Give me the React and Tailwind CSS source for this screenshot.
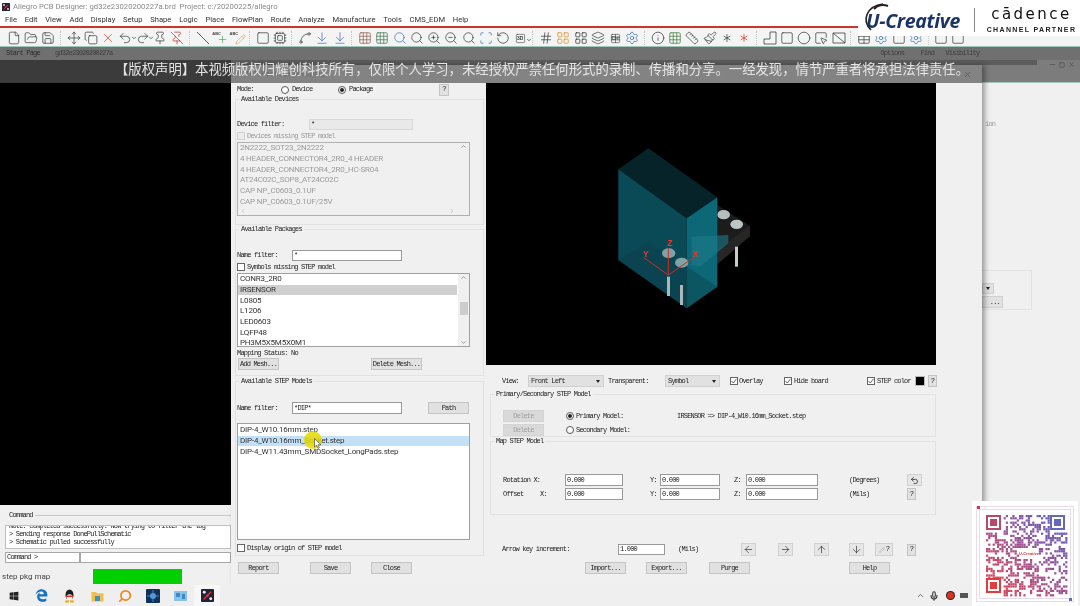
import { ArrowDown, ArrowLeft, ArrowRight, ArrowUp, ArrowDownToLine, Asterisk, ChevronDown, ChevronLeft, ChevronRight, ChevronUp, Circle, Copy, Cpu, File, FolderOpen, Grid3x3, Hash, Info, Layers, LayoutGrid, Mic, Minus, Move, Paintbrush, Pencil, Pin, PinOff, Plus, Redo2, RotateCcw, Ruler, Save, Scan, Search, Settings, Spline, Square, SquareMousePointer, Table, Undo2, X, ZoomIn, ZoomOut } from "lucide-react";
import { FaEdgeLegacy, FaWindows } from "react-icons/fa";

const MENU = ["File", "Edit", "View", "Add", "Display", "Setup", "Shape", "Logic", "Place", "FlowPlan", "Route", "Analyze", "Manufacture", "Tools", "CMS_EDM", "Help"];

const DEVICES = ["2N2222_SOT23_2N2222", "4 HEADER_CONNECTOR4_2R0_4 HEADER", "4 HEADER_CONNECTOR4_2R0_HC-SR04", "AT24C02C_SOP8_AT24C02C", "CAP NP_C0603_0.1UF", "CAP NP_C0603_0.1UF/25V"];
const PACKAGES = ["CONR3_2R0", "IRSENSOR", "L0805", "L1206", "LED0603", "LQFP48", "PH3M5X5M5X0M1"];
const MODELS = ["DIP-4_W10.16mm.step", "DIP-4_W10.16mm_Socket.step", "DIP-4_W11.43mm_SMDSocket_LongPads.step"];

const StepShape = ({ size, className }) => (
  <svg width={size} height={size} viewBox="0 0 14 14" fill="none" stroke="currentColor" strokeWidth="0.75" className={className}>
    <path d="M1 13 V8 H7 V1 H13 V13 Z" />
  </svg>
);

const BoxDiagonal = ({ size, className }) => (
  <svg width={size} height={size} viewBox="0 0 14 14" fill="none" stroke="currentColor" strokeWidth="0.75" className={className}>
    <path d="M1 2 H13 V12 H1 Z M1 2 L13 12" />
  </svg>
);

const LineDown = ({ size, className }) => (
  <svg width={size} height={size} viewBox="0 0 14 14" fill="none" stroke="currentColor" strokeWidth="0.75" className={className}>
    <path d="M1 1 L13 13" />
  </svg>
);

// Toolbar groups: icon, colour, small text on the icon, dropdown caret
const TOOLS = [
  [[File], [FolderOpen], [Save]],
  [[Move], [Copy], [X, "text-[#e0391c]"], [Undo2, null, null, true], [Redo2, null, null, true], [Pin], [PinOff, "text-[#b8332a]"]],
  [[LineDown], [Plus, "text-[#1f9d3a]", "ABC"], [Pencil, "text-[#c9a227]", "ABC"]],
  [[Square], [Cpu]],
  [[Spline], [ArrowDownToLine, "text-[#3b6fb5]"], [ArrowDownToLine, "text-[#3b6fb5]"]],
  [[Grid3x3, "text-[#8a5a4a]"], [Grid3x3, "text-[#3c6e47]"], [Search, "text-[#2f6fb0]"], [Search], [ZoomIn], [ZoomOut], [Search], [Scan, "text-[#2f6fb0]"], [RotateCcw], [Square, null, "3D", true]],
  [[Hash], [LayoutGrid, "text-[#d08a1d]"], [LayoutGrid, "text-[#222]"], [Layers], [Table, null, "CH"], [Settings, "text-[#2f6fb0]"]],
  [[Info], [Grid3x3, "text-[#3c7a3c]"], [Ruler], [Paintbrush], [Asterisk], [Asterisk, "text-[#c9332a]"]],
  [[StepShape], [Square], [Circle], [SquareMousePointer], [BoxDiagonal]],
  [[Table], [Settings, "text-[#2f6fb0]"], [Square], [Settings, "text-[#2f6fb0]"]],
  [[Square], [Square]],
];

const Label = ({ children, className = "", tone = "text-[#222]" }) => (
  <span className={`font-['Liberation_Mono',monospace] text-[7px] leading-none tracking-[-0.82px] whitespace-nowrap ${tone} ${className}`}>{children}</span>
);

const Btn = ({ children, className = "w-[41px]", muted }) => (
  <div className={`h-[12px] shrink-0 flex items-center justify-center border ${muted ? "bg-[#d9d9d9] border-[#d4d4d4]" : "bg-[#e1e1e1] border-[#c4c4c4]"} ${className}`}>
    <Label tone={muted ? "text-[#a0a0a0]" : "text-[#222]"}>{children}</Label>
  </div>
);

const Check = ({ checked, disabled }) => (
  <div className={`w-[8px] h-[8px] shrink-0 border flex items-center justify-center ${disabled ? "border-[#d0d0d0] bg-[#ececec]" : "border-[#666] bg-white"}`}>
    {checked && (
      <svg width="6" height="6" viewBox="0 0 6 6"><path d="M0.5 3 L2.3 5 L5.5 0.8" fill="none" stroke="#444" strokeWidth="0.8" /></svg>
    )}
  </div>
);

const Radio = ({ checked }) => (
  <div className="w-[8px] h-[8px] shrink-0 rounded-full border border-[#555] bg-white flex items-center justify-center">
    {checked && <div className="w-[4px] h-[4px] rounded-full bg-[#222]" />}
  </div>
);

const Field = ({ children, className = "", disabled }) => (
  <div className={`shrink-0 flex items-center px-[1px] border ${disabled ? "border-[#d8d8d8] bg-[#e9e9e9]" : "border-[#999] bg-white"} ${className}`}>
    <Label>{children}</Label>
  </div>
);

const Select = ({ children, className = "" }) => (
  <div className={`h-[12px] shrink-0 flex items-center justify-between pl-[2px] pr-[3px] bg-[#e1e1e1] border border-[#d0d0d0] ${className}`}>
    <Label>{children}</Label>
    <div className="w-0 h-0 border-x-[2.5px] border-x-transparent border-t-[3px] border-t-[#222]" />
  </div>
);

// Group box with the title sitting on its border
const Group = ({ title, className = "", children }) => (
  <div className={`relative border border-[#e2e2e2] ${className}`}>
    <div className="absolute left-[3px] -top-[4px] px-[2px] flex bg-[#f0f0f0]">
      <Label>{title}</Label>
    </div>
    {children}
  </div>
);

const ListBox = ({ items, selected, selectedClass, disabled, className = "", scroll, hscroll }) => (
  <div className={`relative border ${disabled ? "border-[#b0b0b0] bg-[#f0f0f0]" : "border-[#a0a0a0] bg-white"} overflow-hidden ${className}`}>
    <div className={scroll ? "mr-[12px]" : ""}>
      {items.map((item) => (
        <div
          key={item}
          className={`h-[10.67px] pl-[2px] flex items-center font-['Roboto',sans-serif] text-[8px] tracking-[-0.2px] whitespace-nowrap ${disabled ? "text-[#9c9c9c]" : "text-[#333]"} ${item === selected ? selectedClass : ""}`}
        >
          {item}
        </div>
      ))}
    </div>
    {scroll && (
      <div className="absolute right-0 top-0 bottom-0 w-[11px] flex flex-col items-center justify-between bg-[#f0f0f0]">
        <ChevronUp size={7} className="text-[#666]" />
        {!disabled && <div className="absolute top-[28px] w-[8px] h-[13px] bg-[#cdcdcd]" />}
        <ChevronDown size={7} className="text-[#666]" />
      </div>
    )}
    {hscroll && (
      <div className="absolute left-0 right-0 bottom-0 h-[9px] px-[2px] flex items-center justify-between bg-[#f0f0f0]">
        <ChevronLeft size={6} className="text-[#999]" />
        <ChevronRight size={6} className="text-[#999] mr-[12px]" />
      </div>
    )}
  </div>
);

const LeftPanel = () => (
  <div className="w-[255px] shrink-0 pl-[4px]">
    <div className="h-[11px] mt-[1px] pl-[2px] flex items-center">
      <Label className="w-[44px]">Mode:</Label>
      <Radio />
      <Label className="ml-[3px] w-[46px]">Device</Label>
      <Radio checked />
      <Label className="ml-[3px] w-[90px]">Package</Label>
      <Btn className="w-[10px]">?</Btn>
    </div>

    <Group title="Available Devices" className="mt-[4px] w-[249px] h-[126px] pl-[1px] pt-[19px]">
      <div className="h-[11px] flex items-center">
        <Label className="w-[72px]">Device filter:</Label>
        <Field disabled className="w-[104px] h-[11px]">*</Field>
      </div>
      <div className="h-[8px] mt-[2px] flex items-center gap-[2px]">
        <Check disabled />
        <Label tone="text-[#9a9a9a]">Devices missing STEP model</Label>
      </div>
      <ListBox disabled scroll hscroll items={DEVICES} className="mt-[2px] w-[233px] h-[74px]" />
    </Group>

    <Group title="Available Packages" className="mt-[4px] w-[249px] h-[147px] pl-[1px] pt-[20px]">
      <div className="h-[11px] flex items-center">
        <Label className="w-[55px]">Name filter:</Label>
        <Field className="w-[110px] h-[11px]">*</Field>
      </div>
      <div className="h-[8px] mt-[2px] flex items-center gap-[2px]">
        <Check />
        <Label>Symbols missing STEP model</Label>
      </div>
      <ListBox scroll items={PACKAGES} selected="IRSENSOR" selectedClass="bg-[#d0d0d0]" className="mt-[2px] w-[233px] h-[74px]" />
      <div className="h-[8px] mt-[2px] flex items-center">
        <Label>Mapping Status: No</Label>
      </div>
      <div className="mt-[1px] ml-[1px] flex">
        <Btn>Add Mesh...</Btn>
        <Btn className="w-[51px] ml-[92px]">Delete Mesh...</Btn>
      </div>
    </Group>

    <Group title="Available STEP Models" className="mt-[5px] w-[249px] h-[175px] pl-[1px] pt-[20px]">
      <div className="h-[12px] flex items-center">
        <Label className="w-[55px]">Name filter:</Label>
        <Field className="w-[110px] h-[12px]">*DIP*</Field>
        <Btn className="w-[41px] ml-[26px]">Path</Btn>
      </div>
      <ListBox items={MODELS} selected={MODELS[1]} selectedClass="bg-[#c4e0f7]" className="mt-[9px] w-[233px] h-[117px] pt-[1px]" />
      <div className="h-[8px] mt-[4px] flex items-center gap-[2px]">
        <Check />
        <Label>Display origin of STEP model</Label>
      </div>
    </Group>

    <div className="mt-[6px] ml-[3px] flex">
      <Btn>Report</Btn>
      <Btn className="w-[41px] ml-[31px]">Save</Btn>
      <Btn className="w-[41px] ml-[20px]">Close</Btn>
    </div>
  </div>
);

// Isometric socket and its transparent STEP body
const Model = () => (
  <svg width="180" height="180" viewBox="0 0 540 540" className="ml-[104px] mt-[57px]">
    <polygon points="382,195 480,258 480,288 380,375 290,315 295,240" fill="#1c1c1c" />
    <polygon points="480,258 480,288 382,372 382,330" fill="#262626" />
    <rect x="435" y="320" width="9" height="60" fill="#c4cccc" />
    <ellipse cx="401" cy="224" rx="19" ry="14" fill="#b4bebe" />
    <ellipse cx="440" cy="253" rx="19" ry="14" fill="#bcc6c6" />
    <polygon points="175,25 382,172 290,235 85,88" fill="#052329" />
    <polygon points="85,88 290,235 290,505 85,360" fill="#0a4a56" />
    <polygon points="290,235 382,172 382,440 290,505" fill="#0c6877" />
    <polygon points="85,360 175,305 382,440 290,505" fill="#0d3f49" opacity="0.45" />
    <polygon points="305,290 415,285 415,310 330,380 305,375" fill="#1d7c8a" opacity="0.6" />
    <ellipse cx="236" cy="340" rx="20" ry="15" fill="#7fa3a4" />
    <ellipse cx="275" cy="368" rx="20" ry="15" fill="#7fa3a4" />
    <rect x="231" y="410" width="9" height="58" fill="#a9b8b9" />
    <rect x="270" y="435" width="9" height="60" fill="#a9b8b9" />
    <g stroke="#d12a22" strokeWidth="3" fill="none">
      <path d="M235 405 L235 325" />
      <path d="M235 405 L160 352" />
      <path d="M235 405 L315 350" />
    </g>
    <text x="232" y="318" fontSize="26" fontWeight="700" fill="#f0362b" fontFamily="Liberation Sans, sans-serif">Z</text>
    <text x="159" y="350" fontSize="26" fontWeight="700" fill="#f0362b" fontFamily="Liberation Sans, sans-serif">Y</text>
    <text x="308" y="350" fontSize="26" fontWeight="700" fill="#f0362b" fontFamily="Liberation Sans, sans-serif">X</text>
  </svg>
);

const ArrowBtn = ({ icon: Icon, className = "" }) => (
  <div className={`w-[15px] h-[13px] shrink-0 flex items-center justify-center bg-[#e6e6e6] border border-[#d0d0d0] ${className}`}>
    <Icon size={11} strokeWidth={1.4} className="text-[#222]" />
  </div>
);

const RightPanel = () => (
  <div className="flex-1 min-w-0">
    <div className="w-[450px] h-[282px] bg-black overflow-hidden">
      <Model />
    </div>

    <div className="mt-[10px] h-[12px] pl-[16px] flex items-center">
      <Label className="w-[26px]">View:</Label>
      <Select className="w-[76px]">Front Left</Select>
      <Label className="ml-[4px] w-[57px]">Transparent:</Label>
      <Select className="w-[55px]">Symbol</Select>
      <div className="ml-[10px] flex items-center gap-[1px] w-[54px]"><Check checked /><Label>Overlay</Label></div>
      <div className="flex items-center gap-[2px] w-[83px]"><Check checked /><Label>Hide board</Label></div>
      <div className="flex items-center gap-[2px] w-[48px]"><Check checked /><Label>STEP color</Label></div>
      <div className="w-[10px] h-[10px] bg-black border border-[#bbb]" />
      <Btn className="w-[9px] ml-[3px]">?</Btn>
    </div>

    <Group title="Primary/Secondary STEP Model" className="mt-[7px] ml-[4px] w-[446px] h-[43px] pl-[12px] pt-[15px]">
      <div className="h-[12px] flex items-center">
        <Btn muted>Delete</Btn>
        <div className="ml-[22px]"><Radio checked /></div>
        <Label className="ml-[2px] w-[101px]">Primary Model:</Label>
        <Label>IRSENSOR =&gt; DIP-4_W10.16mm_Socket.step</Label>
      </div>
      <div className="h-[12px] mt-[2px] flex items-center">
        <Btn muted>Delete</Btn>
        <div className="ml-[22px]"><Radio /></div>
        <Label className="ml-[2px]">Secondary Model:</Label>
      </div>
    </Group>

    <Group title="Map STEP Model" className="mt-[4px] ml-[4px] w-[446px] h-[74px] pl-[12px] pt-[32px]">
      <div className="h-[12px] flex items-center">
        <Label className="w-[62px]">Rotation X:</Label>
        <Field className="w-[58px] h-[12px]">0.000</Field>
        <Label className="ml-[27px] w-[10px]">Y:</Label>
        <Field className="w-[60px] h-[12px]">0.000</Field>
        <Label className="ml-[14px] w-[12px]">Z:</Label>
        <Field className="w-[72px] h-[12px]">0.000</Field>
        <Label className="ml-[31px] w-[58px]">(Degrees)</Label>
        <div className="w-[15px] h-[12px] flex items-center justify-center bg-[#e6e6e6] border border-[#d0d0d0]"><Undo2 size={9} className="text-[#222]" /></div>
      </div>
      <div className="h-[12px] mt-[2px] flex items-center">
        <Label className="w-[37px]">Offset</Label>
        <Label className="w-[25px]">X:</Label>
        <Field className="w-[58px] h-[12px]">0.000</Field>
        <Label className="ml-[27px] w-[10px]">Y:</Label>
        <Field className="w-[60px] h-[12px]">0.000</Field>
        <Label className="ml-[14px] w-[12px]">Z:</Label>
        <Field className="w-[72px] h-[12px]">0.000</Field>
        <Label className="ml-[31px] w-[58px]">(Mils)</Label>
        <Btn className="w-[9px]">?</Btn>
      </div>
    </Group>

    <div className="mt-[28px] h-[13px] pl-[16px] flex items-center">
      <Label className="w-[116px]">Arrow key increment:</Label>
      <Field className="w-[47px] h-[11px]">1.000</Field>
      <Label className="ml-[13px] w-[63px]">(Mils)</Label>
      <ArrowBtn icon={ArrowLeft} />
      <ArrowBtn icon={ArrowRight} className="ml-[22px]" />
      <ArrowBtn icon={ArrowUp} className="ml-[21px]" />
      <ArrowBtn icon={ArrowDown} className="ml-[20px]" />
      <div className="ml-[11px] w-[18px] h-[13px] flex items-center justify-center gap-[1px] bg-[#e6e6e6] border border-[#d0d0d0]">
        <Pencil size={6} className="text-[#aaa]" />
        <Label>?</Label>
      </div>
      <Btn className="w-[9px] ml-[14px]">?</Btn>
    </div>

    <div className="mt-[6px] ml-[99px] flex">
      <Btn>Import...</Btn>
      <Btn className="w-[41px] ml-[20px]">Export...</Btn>
      <Btn className="w-[41px] ml-[22px]">Purge</Btn>
      <Btn className="w-[41px] ml-[99px]">Help</Btn>
    </div>
  </div>
);

const Dialog = () => (
  <div className="absolute left-[231px] top-[65px] w-[751px] h-[520px] bg-[#f0f0f0] shadow-[3px_0_5px_rgba(0,0,0,0.35)] flex flex-col">
    <div className="h-[18px] shrink-0 bg-[#838383] flex items-center justify-between pl-[9px] pr-[10px]">
      <span className="font-['Roboto',sans-serif] text-[8px] text-[#6c6c6c]">STEP Package Mapping</span>
      <X size={9} className="text-[#555]" />
    </div>
    <div className="flex-1 flex min-h-0">
      <LeftPanel />
      <RightPanel />
    </div>
  </div>
);

const Toolbar = () => (
  <div className="h-[19px] shrink-0 bg-[#f4f4f4] flex items-center pl-[5px] pt-[2px] border-b border-[#9fc4b8]">
    {TOOLS.map((group, i) => (
      <div key={i} className={`flex items-center ${i > 0 ? "ml-[3px] pl-[4px] border-l border-dotted border-[#c8c8c8]" : ""}`}>
        {group.map(([Icon, color, text, caret], j) => (
          <div key={j} className="relative w-[17.3px] flex justify-center">
            <Icon size={text ? 11 : 14} strokeWidth={1.2} className={`${color || "text-[#333]"} ${text === "ABC" ? "translate-x-[3px] translate-y-[1px]" : ""}`} />
            {text && (
              <span className={`absolute font-['Liberation_Sans',sans-serif] font-bold leading-none text-[#444] ${text === "ABC" ? "left-[1px] -top-[1px] text-[4px]" : "left-[5px] top-[3px] text-[5px]"}`}>{text}</span>
            )}
            {caret && <ChevronDown size={6} strokeWidth={3} className="absolute -right-[3px] top-[4px] text-[#444]" />}
          </div>
        ))}
      </div>
    ))}
  </div>
);

const Logo = () => (
  <div className="absolute right-0 top-0 w-[222px] h-[36px] bg-white flex items-start">
    <div className="relative w-[116px] h-[36px] shrink-0">
      <svg width="40" height="34" viewBox="0 0 40 34" className="absolute left-[3px] top-[0px]">
        <path d="M10 30 C0 20 6 6 22 4" fill="none" stroke="#222" strokeWidth="1.6" />
        <path d="M13 9 C16 5 22 4 27 6" fill="none" stroke="#222" strokeWidth="2.2" />
      </svg>
      <span className="absolute left-[8px] top-[9px] font-['Open_Sans',sans-serif] italic font-bold text-[19.5px] leading-[24px] tracking-[-0.3px] text-[#1b3468] whitespace-nowrap">U-Creative</span>
    </div>
    <div className="w-px h-[24px] mt-[8px] bg-[#888]" />
    <div className="ml-[8px] w-[97px] flex flex-col items-center">
      <span className="font-['DejaVu_Sans',sans-serif] text-[15px] leading-[20px] mt-[4px] tracking-[2.5px] text-[#111]">cādence</span>
      <span className="font-['Liberation_Sans',sans-serif] font-bold text-[7px] leading-[8px] mt-[2px] tracking-[1.35px] text-[#222] whitespace-nowrap">CHANNEL PARTNER</span>
    </div>
  </div>
);

// QR code drawn from a small seeded generator, red to blue like the original
const qrCells = () => {
  let seed = 7;
  const rand = () => {
    seed = (seed * 16807) % 2147483647;
    return seed / 2147483647;
  };
  const cells = [];
  for (let y = 14; y < 94; y += 2.2) {
    for (let x = 14; x < 94; x += 2.2) {
      const inFinder = (x < 31 && y < 31) || (x > 76 && y < 31) || (x < 31 && y > 76);
      const inLogo = x > 46 && x < 66 && y > 46 && y < 56;
      if (inFinder || inLogo || rand() < 0.58) continue;
      const t = (x - y + 80) / 160;
      const r = Math.round(230 - t * 140);
      const g = Math.round(70 + t * 25);
      const b = Math.round(80 + t * 125);
      cells.push(<rect key={`${x}-${y}`} x={x} y={y} width="2.2" height="2.2" fill={`rgb(${r},${g},${b})`} />);
    }
  }
  return cells;
};

const Finder = ({ x, y, color }) => (
  <g>
    <rect x={x} y={y} width="15" height="15" fill={color} />
    <rect x={x + 2} y={y + 2} width="11" height="11" fill="#fff" />
    <rect x={x + 4} y={y + 4} width="7" height="7" fill={color} />
  </g>
);

const Qr = () => (
  <div className="absolute z-20 left-[972px] top-[501px] w-[106px] h-[105px] bg-white">
    <svg width="106" height="105" viewBox="0 0 106 105">
      <rect x="4.5" y="5.5" width="97" height="95" fill="none" stroke="#e0b4c4" strokeWidth="1" strokeDasharray="1 1" />
      <rect x="7.5" y="8.5" width="91" height="89" fill="none" stroke="#c6b8de" strokeWidth="1" strokeDasharray="1 1" />
      <rect x="5" y="5" width="3" height="3" fill="#c23b5e" />
      <rect x="97" y="97" width="3" height="3" fill="#5a6fc0" />
      {qrCells()}
      <Finder x={14} y={14} color="#b8476a" />
      <Finder x={78} y={14} color="#6668bd" />
      <Finder x={14} y={77} color="#e23c3c" />
      <text x="47" y="54" fontSize="4" fontWeight="700" fontStyle="italic" fill="#d23b3b" fontFamily="Liberation Sans, sans-serif">U-Creative</text>
    </svg>
  </div>
);

const Penguin = () => (
  <svg width="11" height="14" viewBox="0 0 11 14">
    <ellipse cx="5.5" cy="6" rx="4" ry="5.5" fill="#1c1c1c" />
    <ellipse cx="5.5" cy="8.5" rx="3" ry="3.2" fill="#f4f4f4" />
    <path d="M1.5 6.5 H9.5 L9 8 H2 Z" fill="#e0301e" />
    <ellipse cx="3" cy="12.5" rx="2.2" ry="1.2" fill="#f0b020" />
    <ellipse cx="8" cy="12.5" rx="2.2" ry="1.2" fill="#f0b020" />
  </svg>
);

const AppIcon = ({ size }) => (
  <svg width={size} height={size} viewBox="0 0 14 14">
    <rect width="14" height="14" rx="1" fill="#20243a" />
    <path d="M3 11 L11 3" stroke="#e0332b" strokeWidth="1.6" />
    <circle cx="3.5" cy="3.5" r="1.6" fill="#e8e8e8" />
    <circle cx="10.5" cy="10.5" r="1.6" fill="#e8e8e8" />
    <circle cx="7" cy="7" r="1.3" fill="#e0332b" />
  </svg>
);

const Taskbar = () => (
  <div className="relative z-10 h-[21px] shrink-0 bg-[#efefef] flex items-center">
    <div className="w-[27px] flex justify-center"><FaWindows size={10} className="text-[#222]" /></div>
    <div className="w-[29px] flex justify-center"><FaEdgeLegacy size={13} className="text-[#1272c9]" /></div>
    <div className="w-[27px] flex justify-center"><Penguin /></div>
    <div className="w-[28px] flex justify-center">
      <svg width="13" height="12" viewBox="0 0 13 12"><path d="M0.5 2 H5 L6 3.2 H12.5 V11.5 H0.5 Z" fill="#f0c04a" /><rect x="4" y="6" width="5" height="5" fill="#3d8fd0" /></svg>
    </div>
    <div className="w-[28px] flex justify-center"><Search size={14} strokeWidth={3} className="text-[#ef8a17] -scale-x-100" /></div>
    <div className="w-[28px] flex justify-center">
      <svg width="14" height="14" viewBox="0 0 14 14"><rect width="14" height="14" rx="1" fill="#10325a" /><circle cx="7" cy="7" r="3" fill="#4f9ad6" /><path d="M7 1V13M1 7H13" stroke="#4f9ad6" strokeWidth="0.8" /></svg>
    </div>
    <div className="w-[27px] flex justify-center">
      <svg width="13" height="10" viewBox="0 0 13 10"><rect width="13" height="10" fill="#86c2ea" /><rect x="2" y="2" width="4" height="4" fill="#3d86c6" /><rect x="8" y="3" width="3" height="5" fill="#3d86c6" /></svg>
    </div>
    <div className="w-[26px] h-[21px] flex items-center justify-center bg-[#f7f7f7]">
      <AppIcon size={13} />
    </div>
    <div className="ml-auto mr-[112px] flex items-center gap-[3px]">
      <ChevronUp size={9} className="text-[#444]" />
      <Mic size={10} strokeWidth={2.5} className="text-[#333] ml-[1px]" />
      <div className="w-[7px] h-[7px] rounded-full bg-[#e0301e] ring-1 ring-[#222] ml-[5px]" />
      <div className="w-[8px] h-[5px] bg-[#555] ml-[3px]" />
    </div>
  </div>
);

const CommandPanel = () => (
  <div className="h-[80px] shrink-0 bg-[#f0f0f0] flex flex-col pl-[5px]">
    <div className="h-[20px] flex items-center gap-[2px] pl-[4px]">
      <Label>Command</Label>
      <div className="flex-1 h-px bg-[#c8c8c8]" />
    </div>
    <div className="h-[24px] bg-white border border-[#c0c0c0] pl-[3px] flex flex-col justify-end pb-[1px] overflow-hidden">
      <Label className="h-[8px] shrink-0">Note: completed successfully. Now trying to filter the log</Label>
      <Label className="h-[8px] shrink-0">&gt; Sending response DonePullSchematic</Label>
      <Label className="h-[8px] shrink-0">&gt; Schematic pulled successfully</Label>
    </div>
    <div className="h-[11px] mt-[3px] flex">
      <div className="w-[75px] bg-white border border-[#a8a8a8] pl-[1px] flex items-center"><Label>Command &gt;</Label></div>
      <div className="flex-1 bg-white border border-[#a8a8a8]" />
    </div>
    <div className="flex items-center mt-[6px] -ml-[3px]">
      <span className="w-[91px] font-['Roboto',sans-serif] text-[8px] leading-none text-[#444]">step pkg map</span>
      <div className="w-[89px] h-[15px] bg-[#00d000]" />
    </div>
  </div>
);

export default function App() {
  return (
    <div className="relative w-[1080px] h-[606px] overflow-hidden bg-[#f0f0f0] flex flex-col font-['Roboto',sans-serif] blur-[0.4px]">
      {/* Title bar */}
      <div className="h-[13px] shrink-0 bg-white flex items-center pl-[2px] gap-[3px]">
        <AppIcon size={8} />
        <span className="text-[7.7px] leading-none text-[#8a8a8a] whitespace-pre">Allegro PCB Designer: gd32e23020200227a.brd  Project: c:/20200225/allegro</span>
      </div>

      {/* Menu */}
      <div className="h-[13px] shrink-0 bg-white flex items-center pl-[5px] gap-[7.75px]">
        {MENU.map((item) => (
          <span key={item} className="text-[7.6px] leading-none text-[#333]">{item}</span>
        ))}
      </div>

      <div className="h-[2px] shrink-0 bg-[#c8352b]" />
      <Toolbar />

      {/* Tab strip */}
      <div className="h-[13px] shrink-0 bg-[#707070] flex items-center pl-[6px]">
        <Label className="w-[49px]" tone="text-[#2d2d2d]">Start Page</Label>
        <Label tone="text-[#3c3c3c]">gd32e23020200227a</Label>
        <Label className="ml-[768px] w-[40px]" tone="text-[#3c3c3c]">Options</Label>
        <Label className="w-[25px]" tone="text-[#3c3c3c]">Find</Label>
        <Label tone="text-[#3c3c3c]">Visibility</Label>
      </div>

      {/* Band behind the subtitle */}
      <div className="h-[23px] shrink-0 flex">
        <div className="w-[231px] bg-[#3b3b3b]" />
        <div className="flex-1 bg-[#7c7c7c] border-b border-[#a8c8bc] flex items-start pr-[5px]">
          <div className="flex-1 h-[5px] bg-[#5c5c5c]" />
          <div className="ml-[12px] mt-[1px] flex items-center gap-[3px]">
            <Minus size={7} className="text-[#444]" />
            <Square size={6} className="text-[#444]" />
            <X size={7} className="text-[#444]" />
          </div>
        </div>
      </div>

      {/* Main area */}
      <div className="flex-1 flex min-h-0">
        <div className="w-[231px] shrink-0 flex flex-col">
          <div className="flex-1 bg-black" />
          <CommandPanel />
        </div>
        <div className="flex-1 bg-[#f0f0f0] pl-[751px] pt-[38px] flex flex-col">
          <Label className="h-[7px] pl-[3px]" tone="text-[#999]">ion</Label>
          <div className="mt-[142px] w-[50px] h-[40px] pt-[12px] border-t border-r border-b border-[#e2e2e2] flex flex-col gap-[2px]">
            <div className="w-[12px] h-[11px] bg-[#e1e1e1] border border-[#d0d0d0] flex items-center justify-center">
              <div className="w-0 h-0 border-x-[2.5px] border-x-transparent border-t-[3px] border-t-[#222]" />
            </div>
            <div className="w-[21px] h-[12px] bg-[#e1e1e1] border border-[#d0d0d0] flex items-center justify-end pr-[2px]"><Label>...</Label></div>
          </div>
        </div>
      </div>

      <Taskbar />

      <Dialog />

      {/* Cursor highlight on the model list */}
      <div className="absolute left-[304px] top-[431px] w-[18px] h-[18px] rounded-full bg-[#e6da00]/85" />
      <svg width="8" height="11" viewBox="0 0 8 11" className="absolute left-[314px] top-[438px]">
        <path d="M0.5 0.5 V9 L2.6 7.2 L4 10.4 L5.4 9.8 L4 6.8 H7 Z" fill="#fff" stroke="#333" strokeWidth="0.6" />
      </svg>

      {/* Subtitle burned into the video */}
      <div className="absolute left-[115px] top-[59px] font-['Noto_Sans_CJK_SC',sans-serif] text-[13.35px] leading-[20px] text-[#e4e4e4] whitespace-nowrap">
        【版权声明】本视频版权归耀创科技所有，仅限个人学习，未经授权严禁任何形式的录制、传播和分享。一经发现，情节严重者将承担法律责任。
      </div>

      <Logo />
      <Qr />
    </div>
  );
}
